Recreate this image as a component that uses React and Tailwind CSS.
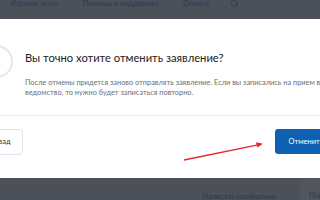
import React from 'react';
import { Search } from 'lucide-react';

export default function App() {
  return (
    <div className="relative w-[320px] h-[200px] overflow-hidden bg-white flex flex-col font-['Lato','Liberation_Sans',sans-serif]">
      {/* dimmed header */}
      <div className="h-[19px] shrink-0 bg-[#4b5059] flex items-start pl-[11px] text-[7.5px] leading-none text-[#2b3a52]">
        <span>Каталог услуг</span>
        <span className="ml-[23px]">Помощь и поддержка</span>
        <span className="ml-[24px]">Оплата</span>
        <Search className="ml-[21px] -mt-[1px] w-[9px] h-[9px] text-[#2b3a52]" strokeWidth={2} />
      </div>

      {/* modal */}
      <div className="h-[159px] shrink-0 flex flex-col">
        <div className="flex items-start pt-[26px] pl-[25px] pr-[8px]">
          <div className="-ml-[45px] mr-[12px] w-[33px] h-[33px] shrink-0 rounded-full border-[2.5px] border-[#e4e8eb]" />
          <div className="flex flex-col">
            <h2 className="mt-[6px] text-[11.2px] leading-[14px] text-[#222]">Вы точно хотите отменить заявление?</h2>
            <p className="mt-[13px] text-[7.4px] leading-[10px] text-[#6b6f74] whitespace-nowrap">
              После отмены придется заново отправлять заявление. Если вы записались на прием в
              <br />
              ведомство, то нужно будет записаться повторно.
            </p>
          </div>
        </div>
        <div className="mt-[17px] h-px bg-[#e8eaed]" />
        <div className="mt-[13px] flex justify-between">
          <button className="-ml-[23px] w-[46px] h-[26px] rounded-[4px] border border-[#dfe3e8] bg-white text-[7.5px] text-[#333]">
            Назад
          </button>
          <button className="-mr-[17px] w-[62px] h-[25px] rounded-[3px] bg-[#0d61b0] text-[7.5px] text-white">
            Отменить
          </button>
        </div>
      </div>

      {/* dimmed footer */}
      <div className="flex-1 bg-[#4b5059] flex">
        <div className="flex-1 flex items-end justify-end pr-[24px] pb-[3px]">
          <span className="text-[7.5px] leading-[9px] text-[#2b3a52]">Написать сообщение</span>
        </div>
        <div className="w-[20px] bg-[#50555e] pl-[9px] pt-[2px]">
          <span className="text-[7.5px] leading-none text-[#2b3a52] whitespace-nowrap">Пор</span>
        </div>
      </div>

      {/* red annotation arrow */}
      <svg className="absolute left-0 top-0 pointer-events-none" width="320" height="200" viewBox="0 0 320 200">
        <line x1="184" y1="160" x2="258" y2="144.8" stroke="#e8262b" strokeWidth="1.3" />
        <polygon points="263,143.8 256,142.2 257.4,147.6" fill="#e8262b" />
      </svg>
    </div>
  );
}
